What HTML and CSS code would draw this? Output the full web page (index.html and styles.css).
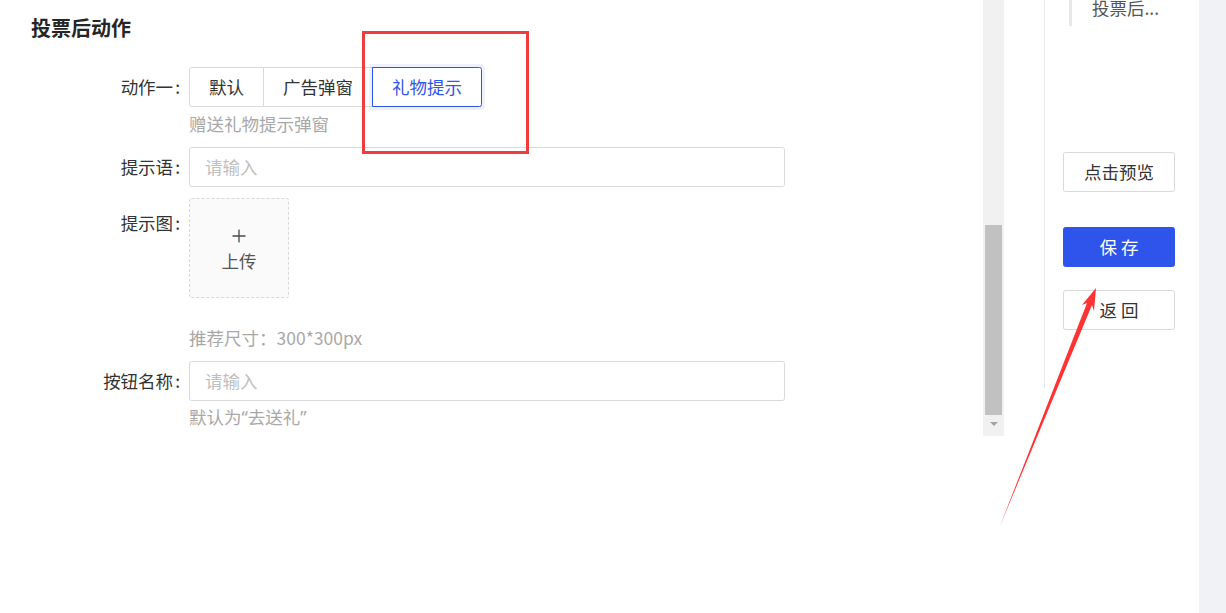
FILE: index.html
```html
<!DOCTYPE html>
<html lang="zh-CN">
<head>
<meta charset="utf-8">
<title>投票后动作</title>
<link rel="stylesheet" href="styles.css">
</head>
<body>
<div class="page">
  <main class="main">
    <h2 class="title">投票后动作</h2>
    <div class="form">
      <div class="item item-a">
        <div class="label">动作一</div>
        <div class="control">
          <div class="radio-group">
            <span class="rb">默认</span>
            <span class="rb">广告弹窗</span>
            <span class="rb rb-on">礼物提示</span>
          </div>
          <div class="help">赠送礼物提示弹窗</div>
        </div>
      </div>
      <div class="item item-b">
        <div class="label">提示语</div>
        <div class="control">
          <div class="input"><span class="ph">请输入</span></div>
        </div>
      </div>
      <div class="item item-c">
        <div class="label label-top">提示图</div>
        <div class="control">
          <div class="upload">
            <svg class="plus" width="16" height="16" viewBox="0 0 16 16"><path d="M8 1.5v13M1.5 8h13" stroke="#4a4a4a" stroke-width="1.3" fill="none"/></svg>
            <span class="upload-text">上传</span>
          </div>
          <div class="help help-gap">推荐尺寸：300*300px</div>
        </div>
      </div>
      <div class="item item-d">
        <div class="label">按钮名称</div>
        <div class="control">
          <div class="input"><span class="ph">请输入</span></div>
          <div class="help">默认为<span class="q">“</span>去送礼<span class="q">”</span></div>
        </div>
      </div>
    </div>
  </main>
  <div class="scrollbar">
    <div class="thumb"></div>
    <div class="arrow"></div>
  </div>
  <aside class="side">
    <div class="side-inner">
      <div class="anchor"><span class="anchor-ink"></span><span class="anchor-text">投票后...</span></div>
      <div class="btn btn-preview">点击预览</div>
      <div class="btn btn-primary">保 存</div>
      <div class="btn btn-back">返 回</div>
    </div>
  </aside>
  <div class="strip"></div>
</div>
<div class="mark-rect"></div>
<svg class="mark-arrow" width="1226" height="613" viewBox="0 0 1226 613">
  <polygon points="1096,288 1082,305 1087,303 1000,526 1092,305 1094,311" fill="#f33"/>
</svg>
</body>
</html>
```
FILE: styles.css
```css
* { box-sizing: border-box; }
html, body { margin: 0; padding: 0; }
body {
  width: 1226px;
  height: 613px;
  overflow: hidden;
  background: #fff;
  font-family: "Noto Sans CJK SC", "Noto Sans", sans-serif;
  font-size: 17.5px;
  color: #333;
  position: relative;
}
.page {
  display: flex;
  height: 613px;
}
.main {
  width: 983px;
  padding: 14px 0 0 31px;
}
.title {
  margin: 0;
  font-size: 20px;
  line-height: 28px;
  font-weight: 700;
  color: #262626;
}
.form {
  margin-top: 25px;
}
.item {
  display: flex;
}
.item-a { margin-bottom: 10px; }
.item-b { margin-bottom: 11px; }
.item-c { margin-bottom: 10px; }
.label {
  width: 158px;
  flex: none;
  text-align: right;
  line-height: 40px;
  height: 40px;
  padding-right: 9px;
  color: #333;
  white-space: nowrap;
}
.label::after {
  content: ":";
  margin-left: 2px;
}
.label-top { padding-top: 5px; }
.control {
  display: flex;
  flex-direction: column;
}
.radio-group {
  display: flex;
  height: 40px;
}
.rb {
  position: relative;
  height: 40px;
  line-height: 38px;
  padding: 0 19px;
  border: 1px solid #d9d9d9;
  margin-left: -1px;
  color: #333;
  background: #fff;
  white-space: nowrap;
}
.rb:first-child {
  margin-left: 0;
  border-radius: 2.5px 0 0 2.5px;
}
.rb:last-child {
  border-radius: 0 2.5px 2.5px 0;
}
.rb-on {
  z-index: 1;
  border-color: #2f54eb;
  color: #2f54eb;
  box-shadow: 0 0 0 3px rgba(47, 84, 235, 0.08);
}
.help {
  margin-top: 3.5px;
  line-height: 26px;
  color: #a8a8a8;
  white-space: nowrap;
}
.q { font-family: "Noto Sans", sans-serif; }
.help-gap { margin-top: 27px; }
.input {
  width: 596px;
  height: 40px;
  border: 1px solid #d9d9d9;
  border-radius: 2.5px;
  padding: 0 15px;
  line-height: 38px;
}
.ph { color: #bfbfbf; }
.upload {
  width: 100px;
  height: 100px;
  border: 1px dashed #d9d9d9;
  border-radius: 2.5px;
  background: #fafafa;
  display: flex;
  flex-direction: column;
  align-items: center;
  justify-content: center;
  padding-top: 6px;
}
.plus { display: block; margin-bottom: 4px; }
.upload-text {
  line-height: 26px;
  color: #555;
}
.scrollbar {
  width: 21px;
  height: 436px;
  background: #f1f1f1;
  display: flex;
  flex-direction: column;
  align-items: center;
  flex: none;
}
.thumb {
  width: 17px;
  height: 190px;
  margin-top: 225px;
  background: #c1c1c1;
}
.arrow {
  margin-top: 7px;
  width: 0;
  height: 0;
  border-left: 4.5px solid transparent;
  border-right: 4.5px solid transparent;
  border-top: 4px solid #a3a3a3;
}
.side {
  width: 195px;
  flex: none;
  padding-left: 40px;
}
.side-inner {
  height: 388px;
  border-left: 1px solid #e8e8e8;
  display: flex;
  flex-direction: column;
}
.anchor {
  display: flex;
  height: 26px;
  margin-left: 24px;
}
.anchor-ink {
  width: 3px;
  height: 26px;
  background: #e8e8e8;
}
.anchor-text {
  margin-left: 20px;
  margin-top: -5px;
  line-height: 26px;
  color: #555;
  font-size: 17.5px;
}
.btn {
  width: 112px;
  height: 40px;
  margin-left: 18px;
  border: 1px solid #d9d9d9;
  border-radius: 2.5px;
  text-align: center;
  line-height: 38px;
  color: #333;
  background: #fff;
}
.btn-preview { margin-top: 126px; }
.btn-primary {
  margin-top: 35px;
  background: #2f54eb;
  border-color: #2f54eb;
  color: #fff;
}
.btn-back { margin-top: 23px; }
.strip {
  flex: 1;
  background: #f0f2f5;
}
.mark-rect {
  position: absolute;
  left: 362px;
  top: 31px;
  width: 167px;
  height: 123px;
  border: 3px solid #f03c3c;
}
.mark-arrow {
  position: absolute;
  left: 0;
  top: 0;
  pointer-events: none;
}
```
